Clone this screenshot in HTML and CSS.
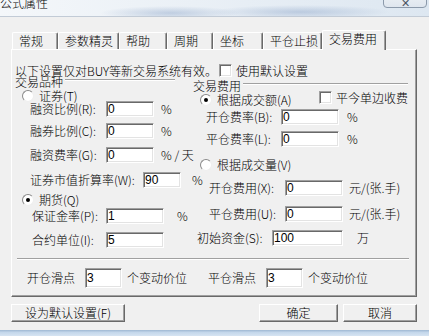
FILE: index.html
```html
<!DOCTYPE html>
<html lang="zh-CN">
<head>
  <meta charset="UTF-8" />
  <meta name="viewport" content="width=device-width, initial-scale=1" />
  <title>公式属性</title>
  <link rel="stylesheet" href="styles.css">
</head>
<body>
  <div class="titlebar">
    <span class="title">公式属性</span>
    <span class="close-btn">✕</span>
  </div>

  <div class="client">
    <div class="tabs">
      <div class="tab">常规</div>
      <div class="tab">参数精灵</div>
      <div class="tab">帮助</div>
      <div class="tab">周期</div>
      <div class="tab">坐标</div>
      <div class="tab">平仓止损</div>
      <div class="tab active">交易费用</div>
    </div>

    <div class="panel">
      <div class="notice">
        <span class="notice-text">以下设置仅对BUY等新交易系统有效。</span>
        <span class="check"><span class="box"></span>使用默认设置</span>
      </div>

      <div class="columns">
        <!-- 交易品种 -->
        <div class="col col-left">
          <div class="group-head"><span>交易品种</span><span class="etch"></span></div>
          <div class="opt mt-3"><span class="radio"></span>证券(T)</div>
          <div class="field f-rate"><span class="lbl">融资比例(R):</span><input type="text" value="0"><span class="unit">%</span></div>
          <div class="field f-rate mt-6"><span class="lbl">融券比例(C):</span><input type="text" value="0"><span class="unit">%</span></div>
          <div class="field f-rate mt-8"><span class="lbl">融资费率(G):</span><input type="text" value="0"><span class="unit">% / 天</span></div>
          <div class="field f-value mt-9"><span class="lbl">证券市值折算率(W):</span><input type="text" value="90"><span class="unit">%</span></div>
          <div class="opt mt-7"><span class="radio on"></span>期货(Q)</div>
          <div class="field f-margin mt-3"><span class="lbl">保证金率(P):</span><input type="text" value="1"><span class="unit">%</span></div>
          <div class="field f-margin mt-8"><span class="lbl">合约单位(I):</span><input type="text" value="5"></div>
        </div>

        <!-- 交易费用 -->
        <div class="col col-right">
          <div class="group-head"><span>交易费用</span><span class="etch"></span></div>
          <div class="opt mt-3"><span class="radio on"></span>根据成交额(A)<span class="check check-right"><span class="box"></span>平今单边收费</span></div>
          <div class="field f-open mt-4"><span class="lbl">开仓费率(B):</span><input type="text" value="0"><span class="unit">%</span></div>
          <div class="field f-open mt-6"><span class="lbl">平仓费率(L):</span><input type="text" value="0"><span class="unit">%</span></div>
          <div class="opt mt-13"><span class="radio"></span>根据成交量(V)</div>
          <div class="field f-fee mt-10"><span class="lbl">开仓费用(X):</span><input type="text" value="0"><span class="unit">元/(张.手)</span></div>
          <div class="field f-fee mt-10"><span class="lbl">平仓费用(U):</span><input type="text" value="0"><span class="unit">元/(张.手)</span></div>
          <div class="field f-cap mt-8"><span class="lbl">初始资金(S):</span><input type="text" value="100"><span class="unit">万</span></div>
        </div>
      </div>

      <div class="sep"></div>

      <div class="slip">
        <div class="slip-group slip-open"><span class="lbl">开仓滑点</span><input type="text" value="3"><span class="unit">个变动价位</span></div>
        <div class="slip-group"><span class="lbl">平仓滑点</span><input type="text" value="3"><span class="unit">个变动价位</span></div>
      </div>
    </div>

    <div class="actions">
      <div class="btn btn-default">设为默认设置(F)</div>
      <div class="btn btn-ok">确定</div>
      <div class="btn btn-cancel">取消</div>
    </div>
  </div>

  <div class="frame-bottom"></div>
</body>
</html>
```

FILE: styles.css
```css
html, body {
  margin: 0;
  padding: 0;
}

body {
  width: 429px;
  height: 336px;
  overflow: hidden;
  font-family: "Noto Sans CJK SC", "Liberation Sans", sans-serif;
  font-size: 12px;
  font-weight: 300;
  line-height: 12px;
  color: #000;
  background: #f0f0f0;
}

/* window chrome */
.titlebar {
  height: 17px;
  display: flex;
  justify-content: space-between;
  align-items: flex-start;
  overflow: hidden;
  background:
    radial-gradient(ellipse 70px 7px at 170px 13px, rgba(110, 140, 185, 0.35), transparent),
    radial-gradient(ellipse 90px 7px at 300px 12px, rgba(110, 140, 185, 0.35), transparent),
    linear-gradient(90deg, #f4f7fa 0%, #eaf0f6 45%, #dde7f1 100%);
  box-shadow: inset 0 -1px #c2cbd6;
}

.title {
  margin-top: -3px;
  line-height: 12px;
}

.close-btn {
  width: 44px;
  height: 20px;
  box-sizing: border-box;
  margin: -12px 2px 0 0;
  border: 1px solid #8c9aab;
  border-radius: 4px;
  background: linear-gradient(180deg, #f2f5f8 0%, #dfe6ee 100%);
  display: flex;
  align-items: flex-end;
  justify-content: center;
  font-size: 11px;
  line-height: 10px;
  color: #4a5563;
}

.client {
  height: 313px;
  box-sizing: border-box;
  padding-top: 13px;
  background: #f0f0f0;
}

.frame-bottom {
  height: 6px;
  background: linear-gradient(180deg, #9fb8d3 0%, #c4d7eb 40%, #d6e4f2 100%);
}

/* tabs */
.tabs {
  display: grid;
  grid-template-columns: 46px 61px 48px 46px 50px 59px 64px;
  align-items: end;
  height: 19px;
  margin-left: 12px;
}

.tab {
  height: 17px;
  box-sizing: border-box;
  padding-left: 6px;
  line-height: 15px;
  border-top: 1px solid #fff;
  border-left: 1px solid #fff;
  border-right: 1px solid #696969;
  border-radius: 2px 2px 0 0;
  box-shadow: inset -1px 0 #a0a0a0;
  background: #f0f0f0;
  white-space: nowrap;
}

.tab.active {
  position: relative;
  z-index: 1;
  height: 20px;
  margin-bottom: -1px;
  line-height: 16px;
}

/* page */
.panel {
  width: 406px;
  height: 248px;
  box-sizing: border-box;
  margin-left: 11px;
  padding: 15px 0 0 3px;
  border: 1px solid;
  border-color: #fff #696969 #696969 #fff;
  box-shadow: inset -1px -1px #a0a0a0;
}

.notice {
  display: flex;
  align-items: center;
  height: 11px;
  white-space: nowrap;
}

.notice-text {
  width: 204px;
}

.check {
  display: flex;
  align-items: center;
  white-space: nowrap;
}

.box {
  width: 13px;
  height: 13px;
  box-sizing: border-box;
  margin-right: 4px;
  border: 1px solid;
  border-color: #a0a0a0 #fff #fff #a0a0a0;
  box-shadow: inset 1px 1px #696969, inset -1px -1px #e3e3e3;
  background: #fff;
}

.columns {
  display: flex;
}

.col {
  display: flex;
  flex-direction: column;
}

.col-left {
  width: 178px;
}

.col-right {
  width: 215px;
  padding-top: 4px;
}

.group-head {
  display: flex;
  align-items: flex-start;
  height: 12px;
}

.col-left .group-head {
  width: 160px;
}

.etch {
  flex: 1;
  height: 0;
  margin: 3px 0 0 2px;
  border-top: 1px solid #a0a0a0;
  border-bottom: 1px solid #fff;
}

.opt {
  display: flex;
  align-items: center;
  height: 10px;
  line-height: 10px;
  padding-left: 7px;
  white-space: nowrap;
}

.radio {
  width: 12px;
  height: 12px;
  box-sizing: border-box;
  margin-right: 5px;
  border-radius: 50%;
  border: 1px solid;
  border-color: #8a8a8a #eee #eee #8a8a8a;
  background: #fff;
  display: flex;
  align-items: center;
  justify-content: center;
}

.radio.on::after {
  content: "";
  width: 4px;
  height: 4px;
  border-radius: 50%;
  background: #000;
}

.check-right {
  margin-left: auto;
  margin-top: -5px;
}

/* label + edit box rows */
.field {
  display: flex;
  align-items: center;
  height: 16px;
  white-space: nowrap;
}

.lbl {
  flex: none;
}

input {
  box-sizing: border-box;
  height: 16px;
  margin: 0;
  padding: 0 1px;
  border: 1px solid;
  border-color: #a0a0a0 #fff #fff #a0a0a0;
  box-shadow: inset 1px 1px #696969, inset -1px -1px #e3e3e3;
  background: #fff;
  font: 12px "Liberation Sans", sans-serif;
  color: #000;
  outline: none;
}

.f-rate { padding-left: 15px; }
.f-rate .lbl { width: 76px; }
.f-rate input { width: 48px; }
.f-rate .unit { margin-left: 7px; }

.f-value { padding-left: 15px; }
.f-value .lbl { width: 113px; }
.f-value input { width: 38px; }
.f-value .unit { margin-left: 11px; }

.f-margin { padding-left: 17px; }
.f-margin .lbl { width: 74px; }
.f-margin input { width: 58px; }
.f-margin .unit { margin-left: 13px; }

.f-open { padding-left: 13px; }
.f-open .lbl { width: 75px; }
.f-open input { width: 58px; }
.f-open .unit { margin-left: 8px; }

.f-fee { padding-left: 16px; }
.f-fee .lbl { width: 76px; }
.f-fee input { width: 58px; }
.f-fee .unit { margin-left: 6px; }

.f-cap { padding-left: 4px; }
.f-cap .lbl { width: 75px; }
.f-cap input { width: 71px; }
.f-cap .unit { margin-left: 14px; }

.mt-3 { margin-top: 3px; }
.mt-4 { margin-top: 4px; }
.mt-6 { margin-top: 6px; }
.mt-7 { margin-top: 7px; }
.mt-8 { margin-top: 8px; }
.mt-9 { margin-top: 9px; }
.mt-10 { margin-top: 10px; }
.mt-13 { margin-top: 13px; }

.sep {
  width: 392px;
  height: 0;
  margin: 10px 0 0 2px;
  border-top: 1px solid #a0a0a0;
  border-bottom: 1px solid #fff;
}

/* slippage */
.slip {
  display: flex;
  align-items: center;
  height: 20px;
  margin-top: 8px;
  padding-left: 12px;
}

.slip-group {
  display: flex;
  align-items: center;
  white-space: nowrap;
}

.slip-open {
  width: 181px;
}

.slip .lbl {
  width: 58px;
}

.slip input {
  width: 37px;
  height: 20px;
}

.slip .unit {
  margin-left: 5px;
}

/* buttons */
.actions {
  display: flex;
  height: 18px;
  margin: 7px 12px 0 11px;
}

.btn {
  height: 18px;
  box-sizing: border-box;
  border: 1px solid;
  border-color: #fff #696969 #696969 #fff;
  box-shadow: inset -1px -1px #a0a0a0;
  background: #f0f0f0;
  display: flex;
  align-items: center;
  justify-content: center;
  white-space: nowrap;
}

.btn-default {
  width: 114px;
  margin-right: auto;
}

.btn-ok {
  width: 79px;
  margin-right: 5px;
}

.btn-cancel {
  width: 74px;
}
```
